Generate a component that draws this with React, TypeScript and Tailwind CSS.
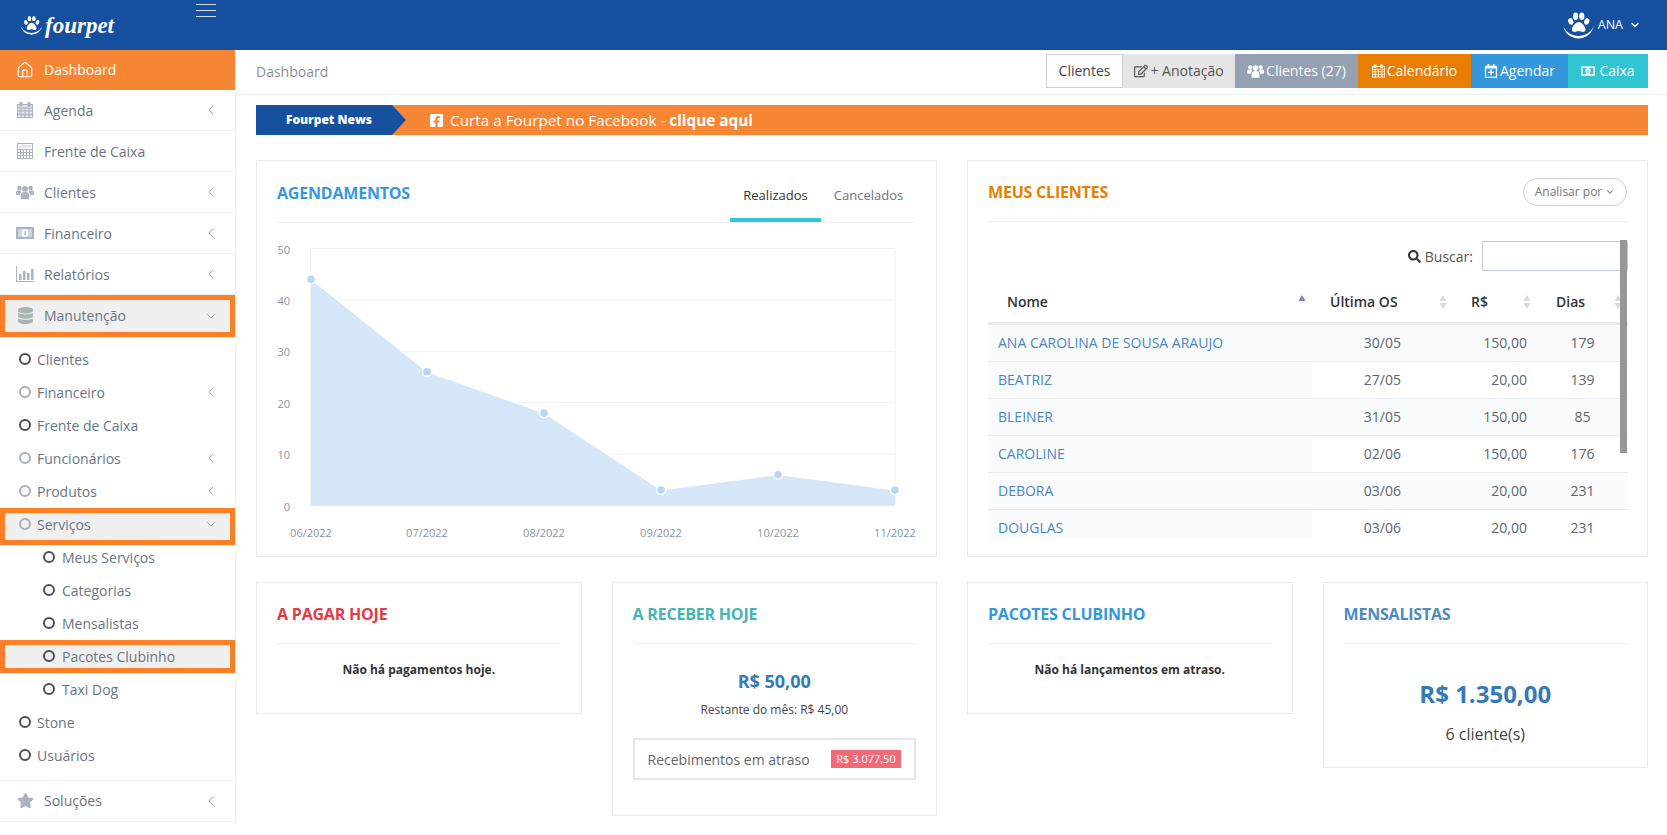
import type { ReactNode } from "react";
import { ChevronDown, ChevronLeft, Home } from "lucide-react";
import { FaDatabase, FaFacebookSquare, FaRegCalendarPlus, FaRegEdit, FaSearch, FaStar } from "react-icons/fa";

function Paw({ className }: { className?: string }) {
  return (
    <svg viewBox="1 0 30 27" className={className} fill="white">
      <ellipse cx="8.5" cy="10" rx="2.4" ry="3.2" transform="rotate(-25 8.5 10)" />
      <ellipse cx="13.2" cy="5" rx="2.5" ry="3.6" />
      <ellipse cx="19.2" cy="5" rx="2.5" ry="3.6" />
      <ellipse cx="24" cy="10" rx="2.4" ry="3.2" transform="rotate(25 24 10)" />
      <path d="M16.2 10.5c3 0 6.6 4.6 6.6 7.4 0 2.4-2.4 2.6-3.6 2.2-1.2-.4-2-.7-3-.7s-1.8.3-3 .7c-1.2.4-3.6.2-3.6-2.2 0-2.8 3.6-7.4 6.6-7.4z" />
      <path d="M1.5 15c1.5 7 7.5 11.5 14.5 11.5S29 22 30.5 15c-2.5 5.5-8 9.2-14.5 9.2S4 20.5 1.5 15z" />
    </svg>
  );
}

function CalendarIcon({ className, fill }: { className?: string; fill?: string }) {
  return (
    <svg viewBox="0 0 16 16" className={className} fill="none" stroke="currentColor">
      <rect x="0.5" y="2.5" width="15" height="13" fill={fill ?? "none"} />
      <path d="M0.5 6h15M0.5 9h15M0.5 12.5h15M4 6v9.5M8 6v9.5M12 6v9.5" />
      <rect x="3" y="0.5" width="2" height="3.5" fill="currentColor" />
      <rect x="11" y="0.5" width="2" height="3.5" fill="currentColor" />
    </svg>
  );
}

function CalculatorIcon() {
  return (
    <svg viewBox="0 0 16 16" className="h-[16px] w-[16px]" fill="none" stroke="currentColor">
      <rect x="0.5" y="0.5" width="15" height="15" />
      <rect x="2" y="2" width="12" height="3" fill="#e3e6eb" stroke="none" />
      <path d="M0.5 6.5h15M3.5 7v8M6.5 7v8M9.5 7v8M12.5 7v8M0.5 9.5h15M0.5 12.5h15" />
    </svg>
  );
}

function UsersIcon({ className }: { className?: string }) {
  return (
    <svg viewBox="0 0 20 16" className={className} fill="currentColor">
      <circle cx="10" cy="4.5" r="3.3" />
      <circle cx="3.8" cy="3.6" r="2.5" />
      <circle cx="16.2" cy="3.6" r="2.5" />
      <path d="M5.3 16v-4.5C5.3 9 7 8 10 8s4.7 1 4.7 3.5V16z" />
      <path d="M0 11V8.5C0 7 1 6.3 3 6.3h2c.1 1 .6 1.7 1.2 2.1C4.8 9 4.2 10 4.2 11.5z" />
      <path d="M20 11V8.5c0-1.5-1-2.2-3-2.2h-2c-.1 1-.6 1.7-1.2 2.1 1.4.6 2 1.6 2 3.1z" />
    </svg>
  );
}

function MoneyIcon({ className, hole }: { className?: string; hole?: string }) {
  return (
    <svg viewBox="0 0 18 12" className={className} fill="currentColor">
      <rect width="18" height="12" />
      <rect x="2" y="2" width="14" height="8" fill={hole ?? "white"} opacity={hole ? 1 : 0.45} />
      <ellipse cx="9" cy="6" rx="3.4" ry="4" fill={hole ? "currentColor" : "white"} />
      <rect x="8.4" y="3.8" width="1.3" height="4.4" fill={hole ?? "currentColor"} />
    </svg>
  );
}

function BarsIcon() {
  return (
    <svg viewBox="0 0 18 16" className="h-[16px] w-[18px]" fill="currentColor">
      <path d="M0 0h1v15h17v1H0z" />
      <rect x="3" y="8" width="2.5" height="6" />
      <rect x="7" y="5" width="2.5" height="9" />
      <rect x="11" y="7" width="2.5" height="7" />
      <rect x="15" y="3" width="2.5" height="11" />
    </svg>
  );
}

function SideRow({
  icon,
  label,
  chevron,
}: {
  icon: ReactNode;
  label: string;
  chevron?: boolean;
}) {
  return (
    <div className="flex h-[41px] items-center border-b border-[#eef1f5] pr-[16px] text-[#6a7584]">
      <span className="flex w-[44px] justify-center pr-[6px] pl-[12px] text-[#a9b3c1]">{icon}</span>
      <span className="flex-1">{label}</span>
      {chevron && <ChevronLeft size={16} strokeWidth={1.5} className="text-[#a7b1bc]" />}
    </div>
  );
}

function SubRow({
  label,
  level = 0,
  chevron,
  open,
  muted,
  mark,
}: {
  label: string;
  level?: number;
  chevron?: boolean;
  open?: boolean;
  muted?: boolean;
  mark?: "tall" | "short";
}) {
  return (
    <div className={`relative flex h-[33px] items-center pr-[16px] text-[#6a7584] ${level ? "pl-[43px]" : "pl-[19px]"}`}>
      {mark && (
        <div
          className={`absolute inset-x-0 top-0 border-[5px] border-[#ff7f27] bg-[#f0f0f0] ${mark === "tall" ? "bottom-[-4px]" : "bottom-0"}`}
        />
      )}
      <span
        className={`relative h-[12px] w-[12px] rounded-full border-2 ${level ? "mr-[7px]" : "mr-[6px]"} ${muted ? "border-[#a7afbb]" : "border-[#4a4f57]"}`}
      />
      <span className="relative flex-1">{label}</span>
      {chevron && <ChevronLeft size={16} strokeWidth={1.5} className="relative text-[#a7b1bc]" />}
      {open && <ChevronDown size={16} strokeWidth={1.5} className="relative text-[#a7b1bc]" />}
    </div>
  );
}

function Sidebar() {
  return (
    <aside className="w-[236px] shrink-0 border-r border-[#eef1f5] pb-[1px]">
      <div className="flex h-[40px] items-center bg-[#f68634] pb-[1px] text-white">
        <span className="flex w-[44px] justify-center pr-[6px] pl-[12px]">
          <Home size={18} strokeWidth={1.5} />
        </span>
        Dashboard
      </div>
      <SideRow icon={<CalendarIcon className="h-[16px] w-[16px]" fill="#dfe3e9" />} label="Agenda" chevron />
      <SideRow icon={<CalculatorIcon />} label="Frente de Caixa" />
      <SideRow icon={<UsersIcon className="h-[16px] w-[18px]" />} label="Clientes" chevron />
      <SideRow icon={<MoneyIcon className="h-[12px] w-[18px]" />} label="Financeiro" chevron />
      <SideRow icon={<BarsIcon />} label="Relatórios" chevron />
      <div className="flex h-[42px] items-center border-[5px] border-[#ff7f27] bg-[#f0f0f0] pr-[11px] pb-[1px] text-[#6a7584]">
        <span className="flex w-[39px] justify-center pr-[6px] pl-[7px] text-[#a9b3b3]">
          <FaDatabase size={17} />
        </span>
        <span className="flex-1">Manutenção</span>
        <ChevronDown size={16} strokeWidth={1.5} className="text-[#a7b1bc]" />
      </div>
      <div className="pt-[5.5px] pb-[8px]">
        <SubRow label="Clientes" />
        <SubRow label="Financeiro" chevron muted />
        <SubRow label="Frente de Caixa" />
        <SubRow label="Funcionários" chevron muted />
        <SubRow label="Produtos" chevron muted />
        <SubRow label="Serviços" open muted mark="tall" />
        <SubRow label="Meus Serviços" level={1} />
        <SubRow label="Categorias" level={1} />
        <SubRow label="Mensalistas" level={1} />
        <SubRow label="Pacotes Clubinho" level={1} mark="short" />
        <SubRow label="Taxi Dog" level={1} />
        <SubRow label="Stone" />
        <SubRow label="Usuários" />
      </div>
      <div className="border-t border-[#eef1f5]">
        <SideRow icon={<FaStar size={17} />} label="Soluções" chevron />
      </div>
    </aside>
  );
}

const toolbar = [
  { label: "Clientes", cls: "w-[77px] border border-[#cfcfcf] bg-white text-[#444]" },
  { label: "+ Anotação", icon: <FaRegEdit size={14} />, cls: "w-[112px] bg-[#e5e5e5] text-[#555]" },
  { label: "Clientes (27)", icon: <UsersIcon className="h-[14px] w-[17px]" />, cls: "w-[123px] bg-[#95a0b3] text-white" },
  { label: "Calendário", icon: <CalendarIcon className="h-[14px] w-[13px]" />, cls: "w-[113px] bg-[#e87e04] text-white" },
  { label: "Agendar", icon: <FaRegCalendarPlus size={14} />, cls: "w-[97px] bg-[#3598dc] text-white" },
  { label: "Caixa", icon: <MoneyIcon className="mr-[2px] h-[10px] w-[14px]" hole="#32c5d2" />, cls: "w-[80px] bg-[#32c5d2] text-white" },
];

function Card({
  title,
  color,
  right,
  children,
  className,
  head = "h-[61px]",
}: {
  title: string;
  color: string;
  right?: ReactNode;
  children?: ReactNode;
  className?: string;
  head?: string;
}) {
  return (
    <section className={`border border-[#e7ecf1] bg-white px-[20px] ${className ?? ""}`}>
      <div className={`flex items-center justify-between border-b border-[#eef1f5] ${head}`}>
        <h2 className={`mt-[2px] text-[16px] font-bold uppercase tracking-[-0.2px] ${color}`}>{title}</h2>
        {right}
      </div>
      {children}
    </section>
  );
}

const points: [number, number, string][] = [
  [311, 44, "06/2022"],
  [427, 26, "07/2022"],
  [544, 18, "08/2022"],
  [661, 3, "09/2022"],
  [778, 6, "10/2022"],
  [895, 3, "11/2022"],
];

const yOf = (v: number) => 505.5 - v * 5.14;

function Chart() {
  const line = points.map(([x, v]) => `${x},${yOf(v)}`).join(" ");
  return (
    <svg viewBox="277 223 640 324" className="block h-[324px] w-[640px]">
      {[0, 10, 20, 30, 40, 50].map((v) => (
        <g key={v}>
          <line x1="310" x2="895" y1={yOf(v)} y2={yOf(v)} stroke="#eef1f5" />
          <text x="290" y={yOf(v) + 5} textAnchor="end" fontSize="11" fill="#8a94a3">
            {v}
          </text>
        </g>
      ))}
      <line x1="310.5" x2="310.5" y1={yOf(50)} y2={yOf(0)} stroke="#eef1f5" />
      <line x1="895" x2="895" y1={yOf(50)} y2={yOf(0)} stroke="#eef1f5" />
      <polygon points={`311,${yOf(0)} ${line} 895,${yOf(0)}`} fill="#d5e6f9" />
      <polyline points={line} fill="none" stroke="white" strokeWidth="1" />
      {points.map(([x, v, label]) => (
        <g key={label}>
          <circle cx={x} cy={yOf(v)} r="4.5" fill="#b9d7f5" stroke="white" strokeWidth="1.5" />
          <text x={x} y="537" textAnchor="middle" fontSize="11" fill="#8a94a3">
            {label}
          </text>
        </g>
      ))}
    </svg>
  );
}

function Sort({ active }: { active?: boolean }) {
  return (
    <svg viewBox="0 0 8 16" className="absolute top-[13px] right-[6px] h-[16px] w-[8px]">
      <path d="M4 1l3.5 6h-7z" fill={active ? "#7b7fd8" : "#d9dbdf"} />
      {!active && <path d="M4 15L.5 9h7z" fill="#d9dbdf" />}
    </svg>
  );
}

const clients = [
  ["ANA CAROLINA DE SOUSA ARAUJO", "30/05", "150,00", "179"],
  ["BEATRIZ", "27/05", "20,00", "139"],
  ["BLEINER", "31/05", "150,00", "85"],
  ["CAROLINE", "02/06", "150,00", "176"],
  ["DEBORA", "03/06", "20,00", "231"],
  ["DOUGLAS", "03/06", "20,00", "231"],
];

function ClientsTable() {
  return (
    <div className="relative mt-[19px] mr-[-1px]">
      <div className="absolute top-[-1px] right-[1px] z-10 h-[213px] w-[7px] bg-[#8c8c8c]/90" />
      <div className="flex h-[30px] items-center justify-end text-[#555]">
        <FaSearch size={13} className="mr-[4px] text-[#333]" />
        Buscar:
        <input className="ml-[9px] h-[30px] w-[146px] border border-[#c2cad8] bg-white" />
      </div>
      <div className="mt-[10px] h-[258px] overflow-hidden">
        <table className="w-full table-fixed border-collapse text-left">
          <colgroup>
            <col className="w-[324px]" />
            <col className="w-[141px]" />
            <col className="w-[84px]" />
            <col />
          </colgroup>
          <thead>
            <tr className="h-[42px] border-b-[3px] border-[#e7ecf1] text-[#333]">
              <th className="relative pl-[19px] font-semibold">Nome<Sort active /></th>
              <th className="relative pl-[18px] font-semibold">Última OS<Sort /></th>
              <th className="relative pl-[18px] font-semibold">R$<Sort /></th>
              <th className="relative pl-[19px] font-semibold">Dias<Sort /></th>
            </tr>
          </thead>
          <tbody>
            {clients.map(([name, last, value, days], i) => {
              const rowBg = i % 2 === 0 ? "bg-[#fafbfd]" : "bg-white";
              return (
                <tr
                  key={name}
                  className={`border-b border-[#e7ecf1] text-[#5c6570] ${i === 0 ? "h-[38px]" : "h-[37px]"} ${rowBg}`}
                >
                  <td className="bg-[#fafbfd] pl-[10px] text-[#4a86c5]">{name}</td>
                  <td className="pr-[52px] text-right">{last}</td>
                  <td className="pr-[10px] text-right">{value}</td>
                  <td className="text-center">{days}</td>
                </tr>
              );
            })}
          </tbody>
        </table>
      </div>
    </div>
  );
}

export default function App() {
  return (
    <div className="min-h-[835px] bg-white font-['Open_Sans',sans-serif] text-[14px]">
      <header className="flex h-[50px] items-center justify-between bg-[#15509f] pr-[26px] text-white">
        <div className="flex h-full w-[235px] items-start">
          <div className="flex h-full flex-1 items-center pl-[20px]">
            <Paw className="h-[20px] w-[23px]" />
            <span className="ml-[2px] font-['Liberation_Serif',serif] text-[23px] font-bold italic leading-none">fourpet</span>
          </div>
          <div className="mt-[4px] mr-[19px] flex w-[20px] flex-col gap-[5px]">
            <span className="h-px bg-white/80" />
            <span className="h-px bg-white/80" />
            <span className="h-px bg-white/80" />
          </div>
        </div>
        <div className="flex items-center text-[12.5px]">
          <Paw className="mr-[4px] h-[28px] w-[31px]" />
          ANA
          <ChevronDown size={12} strokeWidth={2.5} className="ml-[6px]" />
        </div>
      </header>
      <div className="flex">
        <Sidebar />
        <main className="min-w-0 flex-1">
          <div className="flex h-[45px] items-start justify-between border-b border-[#e7ecf1] pt-[4px] pr-[19px] pl-[20px]">
            <span className="mt-[7px] text-[#8a8f96]">Dashboard</span>
            <div className="flex h-[34px]">
              {toolbar.map((b) => (
                <div key={b.label} className={`flex items-center justify-center gap-[2px] pb-[1px] ${b.cls}`}>
                  {b.icon}
                  {b.label}
                </div>
              ))}
            </div>
          </div>
          <div className="pr-[19px] pl-[20px]">
            <div className="mt-[10px] flex h-[30px] items-center bg-[#f68634] text-white">
              <div className="relative flex h-full w-[136px] items-center justify-center bg-[#15509f] pl-[10px] text-[12px] font-extrabold">
                Fourpet News
                <span className="absolute top-0 left-full h-0 w-0 border-y-[15px] border-l-[14px] border-y-transparent border-l-[#15509f]" />
              </div>
              <FaFacebookSquare size={15} className="ml-[37px]" />
              <span className="ml-[6px] text-[15.3px]">
                Curta a Fourpet no Facebook - <b>clique aqui</b>
              </span>
            </div>

            <div className="mt-[25px] grid grid-cols-2 gap-[30px]">
              <Card
                title="Agendamentos"
                color="text-[#3598dc]"
                className="h-[397px]"
                head="h-[62px]"
                right={
                  <div className="flex h-full self-stretch text-[13px] text-[#6a7584]">
                    <div className="flex w-[91px] items-end justify-center border-b-4 border-[#36c6d3] pb-[13px] text-[#333]">Realizados</div>
                    <div className="flex w-[95px] items-end justify-center pb-[17px]">Cancelados</div>
                  </div>
                }
              >
                <Chart />
              </Card>
              <Card
                title="Meus Clientes"
                color="text-[#e87e04]"
                className="h-[397px]"
                right={
                  <div className="mt-[2px] flex h-[28px] w-[104px] items-center justify-center gap-[3px] rounded-full border border-[#ccc] text-[12px] text-[#777]">
                    Analisar por
                    <ChevronDown size={10} strokeWidth={2.5} />
                  </div>
                }
              >
                <ClientsTable />
              </Card>
            </div>

            <div className="mt-[25px] grid grid-cols-4 items-start gap-[30px]">
              <Card title="A pagar hoje" color="text-[#e43a45]" className="h-[132px]">
                <p className="mt-[17px] text-center text-[12px] font-bold text-[#333]">Não há pagamentos hoje.</p>
              </Card>
              <Card title="A receber hoje" color="text-[#44b6ae]" className="h-[234px]">
                <p className="mt-[23px] text-center text-[18px] font-bold leading-[28px] text-[#337ab7]">R$ 50,00</p>
                <p className="mt-[5px] text-center text-[12px] leading-[20px] text-[#444]">Restante do mês: R$ 45,00</p>
                <div className="mt-[18px] flex h-[42px] items-center justify-between border-2 border-[#e2e5e9] pr-[13px] pl-[13px] text-[#666]">
                  Recebimentos em atraso
                  <span className="flex h-[18px] w-[70px] items-center justify-center bg-[#f06a78] text-[11px] text-white">R$ 3.077,50</span>
                </div>
              </Card>
              <Card title="Pacotes Clubinho" color="text-[#3598dc]" className="h-[132px]">
                <p className="mt-[17px] text-center text-[12px] font-bold text-[#333]">Não há lançamentos em atraso.</p>
              </Card>
              <Card title="Mensalistas" color="text-[#4b8bc0]" className="h-[186px]">
                <p className="mt-[32px] text-center text-[24px] font-bold leading-[36px] text-[#337ab7]">R$ 1.350,00</p>
                <p className="mt-[10px] text-center text-[16px] leading-[24px] text-[#444]">6 cliente(s)</p>
              </Card>
            </div>
          </div>
        </main>
      </div>
    </div>
  );
}
